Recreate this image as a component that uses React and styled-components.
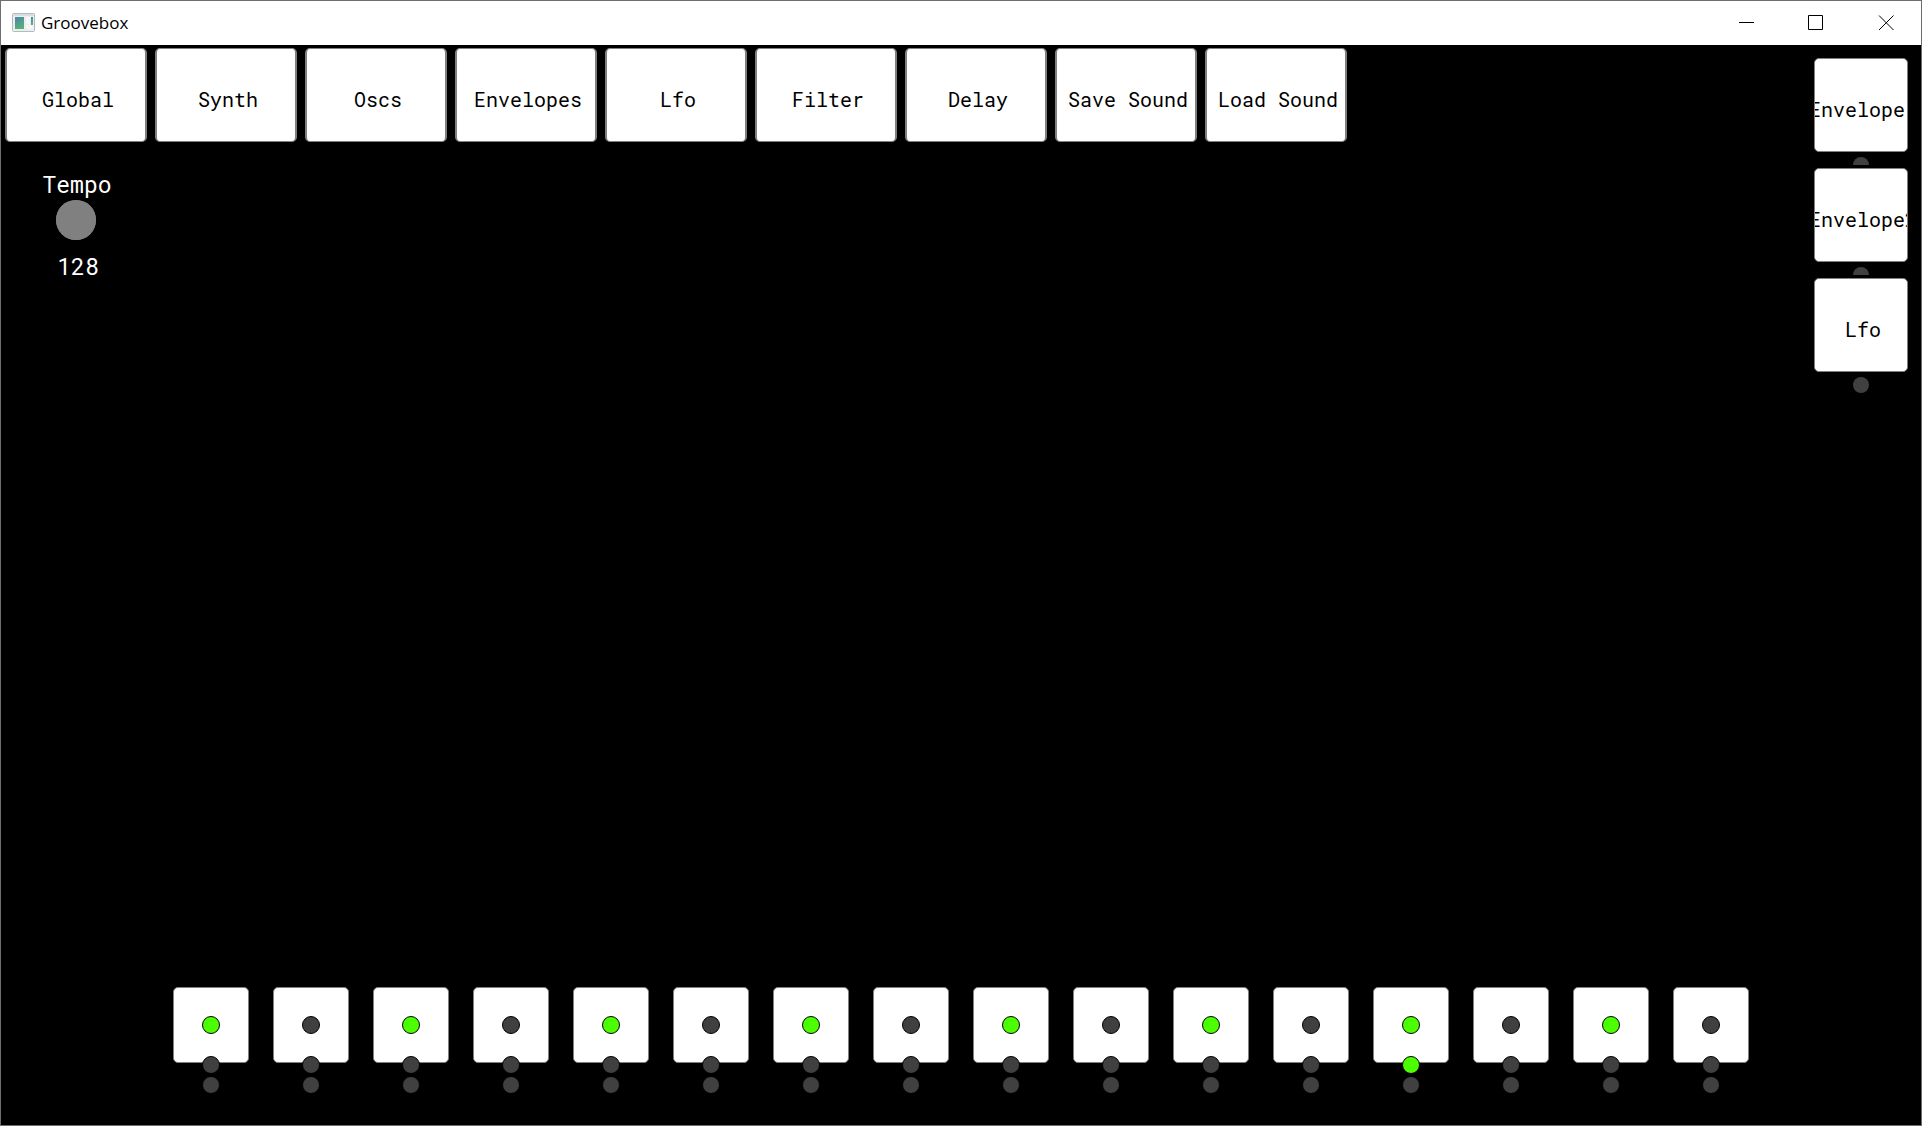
import React, { useState } from "react";
import styled, { createGlobalStyle } from "styled-components";

const TABS = ["Global", "Synth", "Oscs", "Envelopes", "Lfo", "Filter", "Delay", "Save Sound", "Load Sound"];
const MODULATORS = ["Envelope ", "Envelope2", "Lfo"];
const STEPS = Array.from({ length: 16 }, (_, i) => ({ active: i % 2 === 0, playing: i === 12 }));

const GlobalStyle = createGlobalStyle`
  *, *::before, *::after { box-sizing: border-box; }
  body { margin: 0; background: #000; }
  button, input { margin: 0; padding: 0; font: inherit; color: inherit; }
`;

const Window = styled.div`
  display: flex;
  flex-direction: column;
  min-height: 100vh;
  border: 1px solid #6e6e6e;
  background: #000;
  color: #fff;
  font-family: "Roboto Mono", "DejaVu Sans Mono", monospace;
  font-size: 20px;
`;

const TitleBar = styled.header`
  display: flex;
  align-items: center;
  height: 44px;
  padding-left: 11px;
  background: #fff;
  color: #000;
`;

const Title = styled.h1`
  flex: 1;
  margin: 0;
  padding-left: 5px;
  font: 400 17px/24px "Segoe UI", "Open Sans", sans-serif;
`;

const WindowButton = styled.button`
  display: flex;
  align-items: center;
  justify-content: center;
  width: 70px;
  height: 44px;
  border: 0;
  background: transparent;
`;

const Main = styled.main`
  flex: 1;
  display: flex;
  justify-content: space-between;
`;

const Editor = styled.div`
  padding: 3px 0 0 4px;
`;

const Tabs = styled.nav`
  display: flex;
  gap: 8px;
`;

const PadButton = styled.button`
  flex: none;
  width: ${(p) => p.$width}px;
  height: 94px;
  padding: 8px 0 0 4px;
  display: flex;
  align-items: center;
  justify-content: center;
  overflow: hidden;
  border: 1px solid #808080;
  border-width: 1px ${(p) => p.$side}px;
  border-radius: 5px;
  background: #fff;
  color: #000;
  white-space: pre;
`;

const Knob = styled.div`
  display: flex;
  flex-direction: column;
  align-items: center;
  width: 142px;
  padding-top: 27px;
  font-size: 23px;
  line-height: 30px;
`;

const KnobLabel = styled.label`
  padding: 0 0 1px 2px;
`;

const Dial = styled.input`
  appearance: none;
  width: 40px;
  height: 40px;
  border-radius: 50%;
  background: #808080;
  &::-webkit-slider-thumb {
    appearance: none;
    width: 40px;
    height: 40px;
    border-radius: 50%;
    background: #808080;
  }
`;

const KnobValue = styled.output`
  padding: 11px 0 0 4px;
`;

const Modulators = styled.aside`
  padding: 13px 13px 0 0;
`;

const Modulator = styled.div`
  display: flex;
  flex-direction: column;
  align-items: center;
  gap: 5px;
  height: 107px;
  margin-bottom: 3px;
  overflow: hidden;
  &:last-child { height: auto; }
`;

const Led = styled.span`
  flex: none;
  width: ${(p) => p.$size}px;
  height: ${(p) => p.$size}px;
  border: ${(p) => (p.$ring ? 1 : 0)}px solid #000;
  border-radius: 50%;
  background: ${(p) => (p.$on ? "#4cff00" : "#404040")};
`;

const Sequencer = styled.footer`
  display: flex;
  justify-content: center;
  gap: 24px;
  padding-bottom: 31px;
`;

const Step = styled.div`
  display: flex;
  flex-direction: column;
  align-items: center;
`;

const StepButton = styled.button`
  display: flex;
  align-items: center;
  justify-content: center;
  width: 76px;
  height: 76px;
  border: 1px solid #808080;
  border-radius: 5px;
  background: #fff;
`;

const StepLeds = styled.div`
  display: flex;
  flex-direction: column;
  gap: 2px;
  margin-top: -7px;
  z-index: 1;
`;

function AppIcon() {
  return (
    <svg width="24" height="20" viewBox="0 0 24 20" aria-hidden="true">
      <defs>
        <linearGradient id="screen" x1="0" y1="0" x2="0.4" y2="1">
          <stop offset="0" stopColor="#4a86a8" />
          <stop offset="1" stopColor="#58b07c" />
        </linearGradient>
      </defs>
      <rect x="0.5" y="0.5" width="22" height="18" rx="1" fill="#eceeef" stroke="#b4b9bd" />
      <rect x="1" y="1" width="21" height="2" fill="#d9dde0" />
      <rect x="3" y="4" width="9" height="12" fill="url(#screen)" />
      <rect x="14" y="4" width="4" height="7" fill="#f7f7f7" />
      <rect x="14" y="12" width="7" height="4" fill="#f7f7f7" />
      <rect x="19" y="4" width="2" height="8" fill="url(#screen)" />
    </svg>
  );
}

function Glyph({ d }) {
  return (
    <svg width="16" height="16" viewBox="0 0 16 16" fill="none" stroke="#000" aria-hidden="true">
      <path d={d} />
    </svg>
  );
}

export default function App() {
  const [tempo, setTempo] = useState(128);
  return (
    <Window>
      <GlobalStyle />
      <TitleBar>
        <AppIcon />
        <Title>Groovebox</Title>
        <WindowButton aria-label="Minimize"><Glyph d="M1 7.5H16" /></WindowButton>
        <WindowButton aria-label="Maximize"><Glyph d="M0.5 0.5H14.5V14.5H0.5Z" /></WindowButton>
        <WindowButton aria-label="Close"><Glyph d="M1 0.5L15.5 15M15.5 0.5L1 15" /></WindowButton>
      </TitleBar>
      <Main>
        <Editor>
          <Tabs>
            {TABS.map((name) => (
              <PadButton key={name} $width={142} $side={2}>{name}</PadButton>
            ))}
          </Tabs>
          <Knob>
            <KnobLabel htmlFor="tempo">Tempo</KnobLabel>
            <Dial id="tempo" type="range" min="40" max="240" value={tempo} onChange={(e) => setTempo(+e.target.value)} />
            <KnobValue htmlFor="tempo">{tempo}</KnobValue>
          </Knob>
        </Editor>
        <Modulators>
          {MODULATORS.map((name) => (
            <Modulator key={name}>
              <PadButton $width={94} $side={1}>{name}</PadButton>
              <Led $size={16} />
            </Modulator>
          ))}
        </Modulators>
      </Main>
      <Sequencer>
        {STEPS.map((step, i) => (
          <Step key={i}>
            <StepButton aria-label={`Step ${i + 1}`} aria-pressed={step.active}>
              <Led $size={18} $ring $on={step.active} />
            </StepButton>
            <StepLeds>
              <Led $size={18} $ring $on={step.playing} />
              <Led $size={18} $ring />
            </StepLeds>
          </Step>
        ))}
      </Sequencer>
    </Window>
  );
}
